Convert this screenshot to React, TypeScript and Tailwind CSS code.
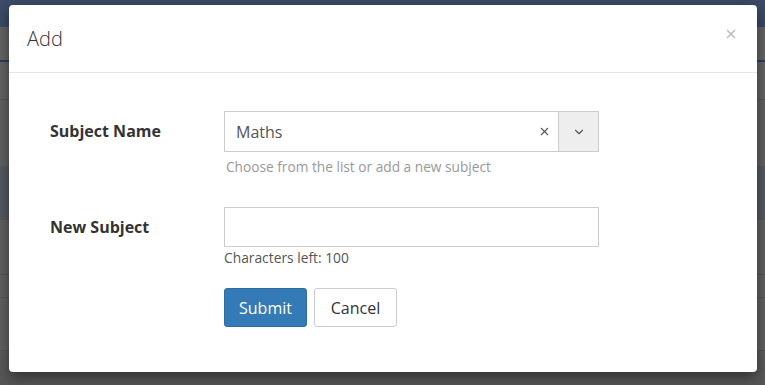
import { X, ChevronDown } from 'lucide-react';

export default function App() {
  return (
    <div className="relative w-[765px] h-[385px] overflow-hidden bg-[#646464] font-['Open_Sans',sans-serif]">
      {/* page underneath the backdrop */}
      <div className="flex flex-col">
        <div className="h-[27px] bg-[#3c4b68]" />
        <div className="h-[33px] bg-[#666666]" />
        <div className="h-[2px] bg-[#2d3c68]" />
        <div className="h-[38px] bg-[#666666] border-b border-[#5a5a5a]" />
        <div className="h-[66px] bg-[#636363]" />
        <div className="h-[54px] bg-[#575b64]" />
        <div className="h-[55px] bg-[#636363] border-b border-[#575757]" />
        <div className="h-[23px] bg-[#636363] border-b border-[#575757]" />
        <div className="h-[53px] bg-[#636363] border-b border-[#555555]" />
        <div className="h-[40px] bg-gradient-to-b from-[#5e5e5e] to-[#555555]" />
      </div>

      {/* modal */}
      <div className="absolute left-[9px] top-[5px] w-[748px] h-[367px] bg-white rounded-[4px] shadow-[0_5px_15px_rgba(0,0,0,0.5)]">
        <div className="relative h-[68px] border-b border-[#e5e5e5] px-[18px] flex items-center">
          <h4 className="text-[20px] font-light text-[#333] leading-none pt-[1px]">Add</h4>
          <X className="absolute right-[19px] top-[22px] w-[14px] h-[14px] text-[#c0c0c0]" strokeWidth={3} />
        </div>

        <div className="pl-[41px] pt-[38px]">
          <div className="flex">
            <label className="w-[174px] pt-[8px] text-[16px] font-bold text-[#333]">Subject Name</label>
            <div className="w-[375px]">
              <div className="flex h-[41px] border border-[#cccccc] text-[16px] text-[#555]">
                <div className="flex-1 flex items-center pl-[11px]">Maths</div>
                <div className="w-[28px] flex items-center justify-center text-[#555]">
                  <X className="w-[13px] h-[13px]" strokeWidth={2} />
                </div>
                <div className="w-[40px] bg-[#eeeeee] border-l border-[#cccccc] flex items-center justify-center">
                  <ChevronDown className="w-[14px] h-[14px] text-[#555]" strokeWidth={2} />
                </div>
              </div>
              <p className="mt-[5px] pl-[2px] text-[13.7px] text-[#999999]">Choose from the list or add a new subject</p>
            </div>
          </div>

          <div className="flex mt-[29px]">
            <label className="w-[174px] pt-[8px] text-[16px] font-bold text-[#333]">New Subject</label>
            <div className="w-[375px]">
              <input className="block w-full h-[40px] border border-[#cccccc] outline-none px-[11px]" />
              <p className="mt-[1px] text-[13.8px] text-[#555]">Characters left: 100</p>
              <div className="flex gap-[7px] mt-[20px]">
                <button className="w-[83px] h-[39px] rounded-[3px] bg-[#337ab7] border border-[#2e6da4] text-white text-[16px]">Submit</button>
                <button className="w-[83px] h-[39px] rounded-[3px] bg-white border border-[#cccccc] text-[#333] text-[16px]">Cancel</button>
              </div>
            </div>
          </div>
        </div>
      </div>
    </div>
  );
}
